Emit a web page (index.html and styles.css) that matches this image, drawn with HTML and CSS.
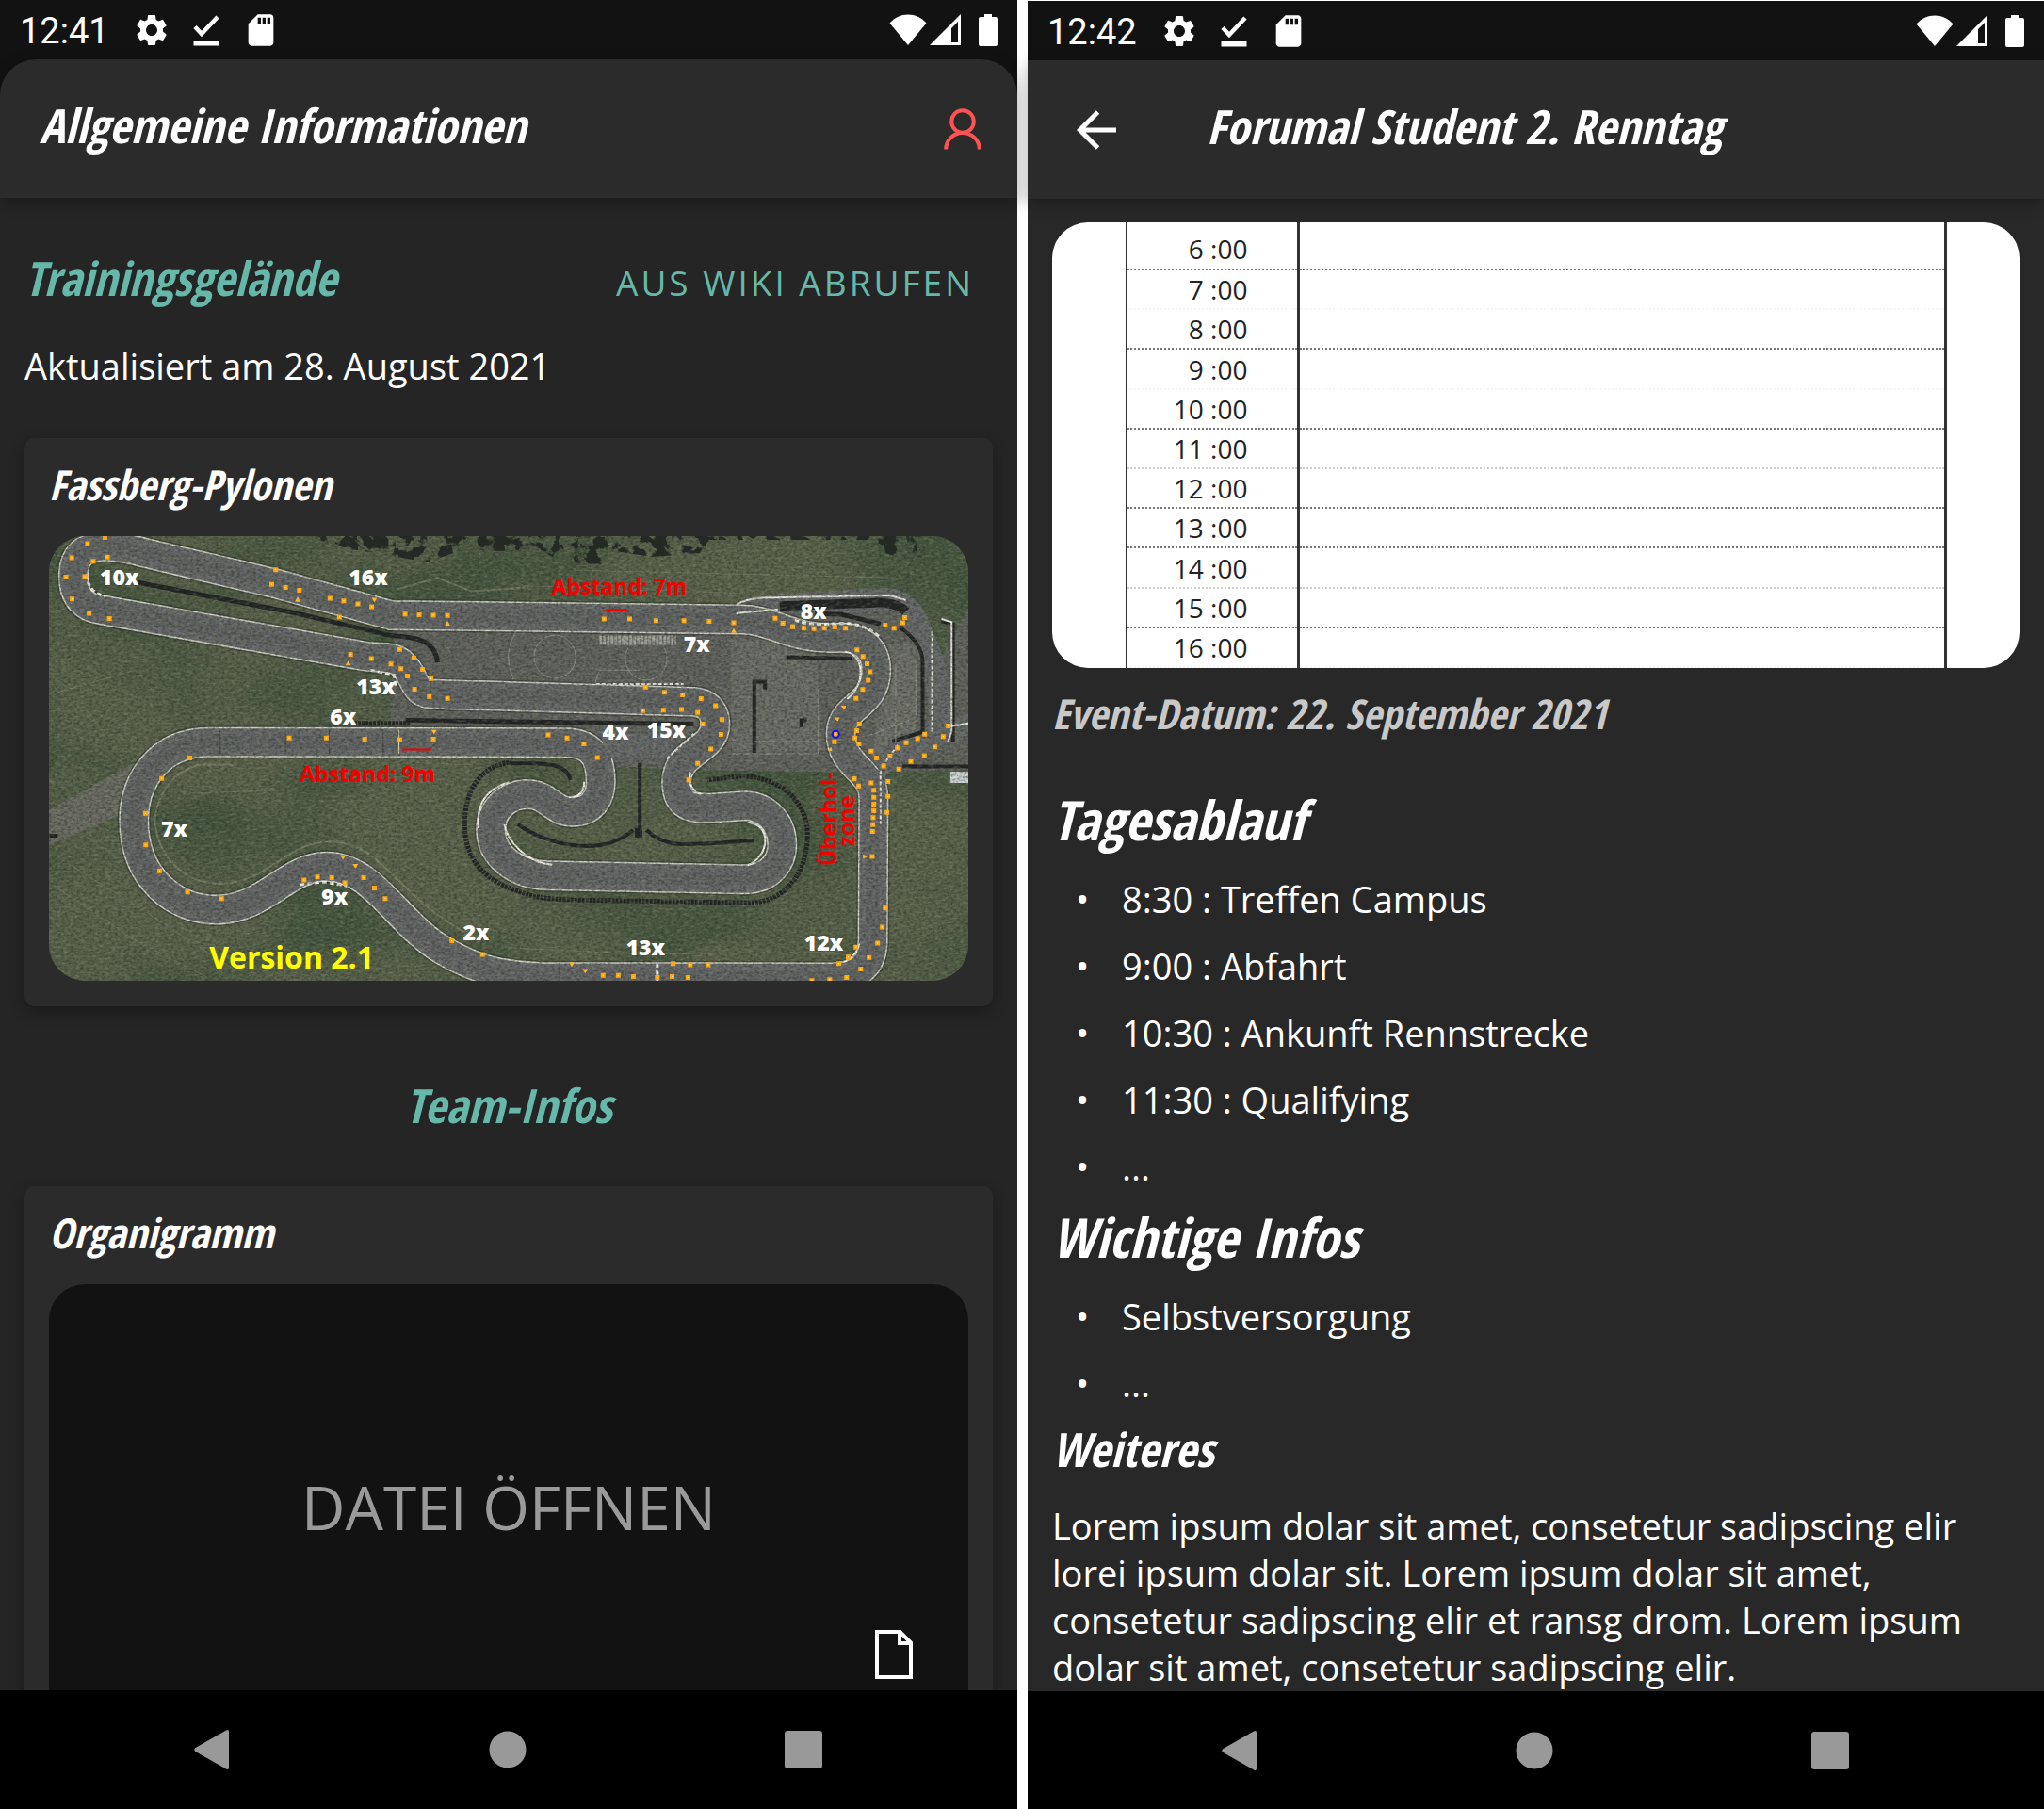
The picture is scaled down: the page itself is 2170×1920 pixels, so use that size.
FILE: index.html
```html
<!DOCTYPE html>
<html lang="de">
<head>
<meta charset="utf-8">
<meta name="viewport" content="width=device-width, initial-scale=1">
<title>Allgemeine Informationen</title>
<link rel="stylesheet" href="styles.css">
</head>
<body>
<svg class="sprite" aria-hidden="true">
  <symbol id="gear" viewBox="0 0 24 24"><path fill="currentColor" d="M19.14 12.94c.04-.3.06-.61.06-.94 0-.32-.02-.64-.07-.94l2.03-1.58c.18-.14.23-.41.12-.61l-1.92-3.32c-.12-.22-.37-.29-.59-.22l-2.39.96c-.5-.38-1.03-.7-1.62-.94l-.36-2.54c-.04-.24-.24-.41-.48-.41h-3.84c-.24 0-.43.17-.47.41l-.36 2.54c-.59.24-1.13.57-1.62.94l-2.39-.96c-.22-.08-.47 0-.59.22L2.74 8.87c-.12.21-.08.47.12.61l2.03 1.58c-.05.3-.09.63-.09.94s.02.64.07.94l-2.03 1.58c-.18.14-.23.41-.12.61l1.92 3.32c.12.22.37.29.59.22l2.39-.96c.5.38 1.03.7 1.62.94l.36 2.54c.05.24.24.41.48.41h3.84c.24 0 .44-.17.47-.41l.36-2.54c.59-.24 1.13-.56 1.62-.94l2.39.96c.22.08.47 0 .59-.22l1.92-3.32c.12-.22.07-.47-.12-.61l-2.01-1.58zM12 15.6c-1.98 0-3.6-1.62-3.6-3.6s1.62-3.6 3.6-3.6 3.6 1.62 3.6 3.6-1.62 3.6-3.6 3.6z"/></symbol>
  <symbol id="done" viewBox="0 0 40 40"><path fill="none" stroke="currentColor" stroke-width="4.500" d="M8 16.500l7 7.500L32 6"/><path fill="currentColor" d="M6.500 31h27v5.500h-27z"/></symbol>
  <symbol id="sdcard" viewBox="0 0 24 24"><path fill="currentColor" d="M18 2h-8L4.020 8 4 20c0 1.100.9 2 2 2h12c1.100 0 2-.9 2-2V4c0-1.100-.9-2-2-2zm-6 6h-2V4h2v4zm3 0h-2V4h2v4zm3 0h-2V4h2v4z"/></symbol>
  <symbol id="wifi" viewBox="0 0 40 34"><path fill="currentColor" d="M.500 9.500C11-2.500 29-2.500 39.500 9.500L20 33z"/></symbol>
  <symbol id="signal" viewBox="0 0 34 34"><path fill="currentColor" fill-rule="evenodd" d="M33 0v33H0zM30 8l-7 7v15h7z"/></symbol>
  <symbol id="battery" viewBox="0 0 20 34"><path fill="currentColor" d="M6 0h8v3h4q2 0 2 2v27q0 2-2 2H2q-2 0-2-2V5q0-2 2-2h4z"/></symbol>
  <symbol id="navback" viewBox="0 0 44 44"><path fill="currentColor" d="M37 1.500q3-1.500 3 1.500v38q0 3-3 1.500L4.500 24q-2.500-2 0-4z"/></symbol>
  <symbol id="navhome" viewBox="0 0 44 44"><circle cx="22" cy="22" r="19.500" fill="currentColor"/></symbol>
  <symbol id="navrecent" viewBox="0 0 44 44"><rect x="2" y="2" width="40" height="40" rx="3" fill="currentColor"/></symbol>
</svg>

<div class="screens">
  <section class="phone phone-info">
    <div class="status">
      <span class="clock">12:41</span>
      <svg class="sicon"><use href="#gear"/></svg><svg class="sicon"><use href="#done"/></svg><svg class="sicon"><use href="#sdcard"/></svg>
      <span class="radio"><svg class="wifi"><use href="#wifi"/></svg><svg class="signal"><use href="#signal"/></svg><svg class="battery"><use href="#battery"/></svg></span>
    </div>
    <header class="bar bar-round">
      <h1 class="title">Allgemeine Informationen</h1>
      <button class="iconbtn" aria-label="Profil"><svg class="user" viewBox="0 0 40 44"><g fill="none" stroke="#ff5252" stroke-width="4"><circle cx="20" cy="14" r="11.800"/><path d="M2.200 43.500C2.200 34 10 26 20 26s17.800 8 17.800 17.500"/></g></svg></button>
    </header>
    <main class="content">
      <div class="sechead">
        <h2 class="sectitle">Trainingsgelände</h2>
        <button class="textbtn">AUS WIKI ABRUFEN</button>
      </div>
      <p class="updated">Aktualisiert am 28. August 2021</p>
      <article class="card">
        <h3 class="cardtitle">Fassberg-Pylonen</h3>
        <svg class="map" viewBox="0 0 975 472" preserveAspectRatio="xMidYMid slice" role="img" aria-label="Streckenplan Fassberg">
          <defs>
            <filter id="grain" x="0" y="0" width="100%" height="100%"><feTurbulence type="fractalNoise" baseFrequency=".3 .4" numOctaves="3" seed="4"/><feColorMatrix values="0 0 0 0 .14  0 0 0 0 .17  0 0 0 0 .12  2.200 0 0 0 -.85"/></filter>
            <filter id="light" x="0" y="0" width="100%" height="100%"><feTurbulence type="fractalNoise" baseFrequency=".15 .4" numOctaves="3" seed="9"/><feColorMatrix values="0 0 0 0 .68  0 0 0 0 .67  0 0 0 0 .55  2.200 0 0 0 -1"/></filter>
            <filter id="patch" x="0" y="0" width="100%" height="100%"><feTurbulence type="fractalNoise" baseFrequency=".006 .011" numOctaves="3" seed="12"/><feColorMatrix values="0 0 0 0 .22  0 0 0 0 .31  0 0 0 0 .22  3 0 0 0 -1.200"/></filter>
            <filter id="trees" x="0" y="0" width="100%" height="100%"><feTurbulence type="fractalNoise" baseFrequency=".07" numOctaves="5" seed="3"/><feColorMatrix values="0 0 0 0 .14  0 0 0 0 .16  0 0 0 0 .14  12 0 0 0 -5.800" result="n"/><feComposite in="n" in2="SourceAlpha" operator="in"/></filter>
            <path id="track" d="M1160 497L820 415 430 335C280 300 218 320 218 395C218 450 250 478 300 483L1060 600C1120 612 1160 600 1190 620C1240 655 1220 702 1290 702L2060 722C2100 724 2124 745 2124 780C2124 850 2009 850 2009 930C2009 1000 2060 998 2110 998L2210 992C2350 992 2370 1183 2210 1183L1630 1173C1530 1173 1458 1120 1458 1055C1458 1000 1510 962 1565 962C1630 962 1640 1008 1700 1008C1760 1008 1784 970 1784 930C1784 850 1740 829 1680 828L620 827C470 827 398 930 398 1030C398 1180 520 1262 640 1262C790 1262 850 1150 970 1150C1110 1150 1180 1300 1320 1370C1430 1425 1500 1432 1600 1437L2470 1438C2560 1438 2592 1400 2592 1340L2594 970C2594 900 2497 890 2497 805C2497 730 2602 735 2602 640C2602 585 2560 555 2500 555C2350 565 2300 508 2200 508Z"/>
            <path id="conesA" d="M312 295h.1M260 311h.1M213 348h.1M196 398h.1M214 455h.1M265 492h.1M325 506h.1M277 357h.1M319 346h.1M252 397h.1M819 379h.1M807 417h.1M848 425h.1M889 432h.1M980 453h.1M1021 460h.1M1063 468h.1M1104 475h.1M1008 502h.1M1203 494h.1M1245 496h.1M1287 497h.1M1329 498h.1M1041 599h.1M1103 610h.1M1187 586h.1M1229 608h.1M1161 624h.1M1191 636h.1M1210 655h.1M1255 638h.1M1280 662h.1M1231 689h.1M1275 708h.1M1329 713h.1M859 816h.1M969 816h.1M1083 819h.1M1187 820h.1M1287 819h.1M564 868h.1M480 921h.1M432 1012h.1M433 1094h.1M474 1161h.1M557 1216h.1M658 1233h.1M903 1185h.1M943 1177h.1M985 1179h.1M1024 1192h.1M1080 1179h.1M1112 1206h.1M1144 1233h.1M1342 1343h.1M1433 1378h.1"/>
            <path id="conesB" d="M282 507h.1M358 507h.1M436 511h.1M519 511h.1M594 513h.1M667 517h.1M790 505h.1M813 518h.1M842 527h.1M875 531h.1M905 532h.1M936 531h.1M967 528h.1M999 531h.1M1117 523h.1M1143 531h.1M1169 517h.1M1175 503h.1M1033 587h.1M1051 604h.1M1063 623h.1M1072 644h.1M1066 666h.1M1050 690h.1M1030 713h.1M1040 780h.1M1032 797h.1M1027 816h.1M1039 831h.1M970 806h.1M966 826h.1M1075 850h.1M1091 868h.1M1112 889h.1M1131 863h.1M1153 842h.1M1179 828h.1M1213 818h.1M1234 806h.1M1304 785h.1M1289 812h.1M1264 839h.1M1233 862h.1M1193 877h.1M1157 897h.1M405 684h.1M461 697h.1M515 704h.1M570 714h.1M613 732h.1M632 768h.1M629 807h.1M599 845h.1M560 882h.1M533 925h.1M397 745h.1M458 744h.1M512 742h.1M560 750h.1M575 780h.1M116 808h.1M172 816h.1M222 831h.1M262 867h.1M1025 922h.1M1038 941h.1M1075 933h.1M1083 952h.1M1083 970h.1M1083 988h.1M1083 1005h.1M1081 1023h.1M1080 1041h.1M1079 1059h.1M1125 929h.1M1125 968h.1M1122 1009h.1M1078 1124h.1M1117 1258h.1M1108 1307h.1M1094 1349h.1M1069 1386h.1M1044 1416h.1M1002 1438h.1M952 1444h.1M899 1446h.1M1030 1359h.1M1007 1385h.1M979 1402h.1M487 1402h.1M538 1405h.1M591 1405h.1M279 1433h.1M324 1433h.1M369 1436h.1M440 1438h.1M484 1436h.1M531 1438h.1"/>
          </defs>
          <rect width="975" height="472" fill="#5a624b"/>
          <rect width="975" height="472" filter="url(#patch)" opacity=".6"/>
          <g transform="translate(-52 -119) scale(.35714 .40816)" fill="none">
            <path fill="#6a6b63" d="M130 1010L400 880 400 1000 130 1100z"/>
            <path fill="#61625f" d="M1170 500L2200 508 2180 460 2700 470 2800 600 2876 480V900L2480 905 2150 900 1780 890 1660 800 1160 780z"/>
            <path fill="#6b6d68" d="M2172 560h250l20 290h-270z"/>
            <path fill="#6e6f6a" d="M2640 570h80v300h-130z"/>
            <path stroke="#66686a" stroke-width="24" d="M2590 900L2700 830 2890 780M2680 500Q2790 560 2790 780M2200 490L2320 470 2640 455Q2720 470 2740 560"/>
            <path stroke="#8c8c74" stroke-width="2" opacity=".6" d="M690 885H600C500 900 460 980 460 1040C480 1150 570 1195 660 1195C800 1190 850 1085 980 1085C1140 1085 1170 1230 1420 1340M1180 430L1300 400 1400 435 1560 425"/>
            <path stroke="#84866f" stroke-width="1" opacity=".5" d="M1240 880L1400 886M1540 420L2200 440M1700 380L2680 400M1500 1360L1900 1378 2480 1372M180 1130L420 1260 700 1420M160 1200L400 1340 620 1440M160 700L400 640M560 960L900 950"/>
            <g stroke="#202224">
              <path stroke-width="5" d="M410 412L880 492 1160 550C1240 555 1290 560 1300 620M1205 770L2060 780"/>
              <path stroke-width="5" stroke-dasharray="3 1" d="M1030 778H1220M1512 880C1420 890 1380 960 1380 1040C1380 1160 1480 1200 1560 1220C1620 1240 1700 1236 1930 1240L2220 1244C2330 1244 2400 1170 2398 1060C2390 960 2290 915 2200 915L2100 925"/>
              <path stroke-width="4" d="M1512 882C1620 880 1680 880 1695 925M1538 1040C1620 1090 1780 1130 1880 1055M1920 1055C1980 1110 2060 1090 2240 1083M1900 880V1060M2335 606L2530 610M2672 528Q2740 570 2740 620V800L2650 825M2240 855V670H2272V690M2795 512L2830 520V825M2380 788V770H2396M2680 890H2876M147 1070H172M1820 820L1845 858M1972 845L1990 835"/>
              <path stroke-width="10" d="M1886 1062h22"/>
            </g>
            <g stroke="#8b8d87" stroke-width="1">
              <ellipse cx="1648" cy="605" rx="62" ry="56"/><ellipse cx="1919" cy="610" rx="62" ry="56"/><path d="M1532 540Q1490 600 1525 665M1768 672L1780 640H1900M2240 825H2430M2175 857H2430V690M2720 620V760M2580 810L2700 770M2660 620V830"/>
            </g>
            <path stroke="#b9bab4" stroke-width="10" stroke-dasharray="3 1" opacity=".75" d="M1780 562H2008"/>
            <use href="#track" stroke="#1f211e" stroke-width="35" opacity=".4"/>
            <use href="#track" stroke="#d2d3c9" stroke-width="32"/>
            <use href="#track" stroke="#66686a" stroke-width="29"/>
            <use href="#track" stroke="#5f6163" stroke-width="14" opacity=".7"/>
            <path stroke="#66686a" stroke-width="26" d="M1790 838H2000M2594 900V960"/>
            <path stroke="#202224" stroke-width="10" d="M2315 473L2620 464Q2670 468 2690 488"/>
            <path stroke="#202224" stroke-width="5" d="M2420 493L2500 495 2615 520"/>
            <path stroke="#f2f0e6" stroke-width="2" d="M1512 930C1440 950 1415 990 1420 1050M1498 1040C1505 1080 1560 1140 1640 1145M1735 930Q1735 970 1690 970M2220 1035C2290 1040 2290 1120 2220 1147M2050 905Q2040 950 2082 962M2510 592C2570 600 2570 680 2515 715M2490 1400Q2540 1395 2552 1350"/>
            <path stroke="#f0efe8" stroke-width="3" stroke-dasharray="5 3" d="M258 390Q260 440 315 447M1100 640L1170 652 1175 680M890 1198L960 1190 1030 1200M2360 510Q2400 525 2510 518 2570 520 2615 555M1952 1400V1448"/>
            <path stroke="#e8e8e0" stroke-width="2" stroke-dasharray="4 2" d="M1770 676H2030M2768 540V800M2615 900V1040M1980 870L2060 805M2620 890L2670 830"/>
            <path stroke="#e8e8e0" stroke-width="2" d="M2188 470Q2210 455 2260 452L2640 445 2690 458M2186 492L2310 482M2796 507L2826 515V800L2815 825M2826 785L2876 778"/>
            <path stroke="#35373a" stroke-width="1" opacity=".6" d="M654 795V858M746 795V858M848 795V858M978 795V858M1138 795V858M1662 1400V1448M1118 450L1100 480"/>
            <path stroke="#dcd9a8" stroke-width="1" d="M1185 790V858"/>
            <path stroke="#cfd6d8" stroke-width="12" d="M2822 918H2876"/>
          </g>
          <rect width="975" height="472" filter="url(#grain)" opacity=".5"/>
          <rect width="975" height="472" filter="url(#light)" opacity=".3"/>
          <path filter="url(#trees)" d="M270 0H930L925 22 890 26 870 4 700 4 690 18 640 22 600 16 590 30 545 28 520 14 480 16 440 14 400 28 360 20 320 14z"/>
          <g fill="none" stroke-linecap="square">
            <g transform="translate(-52 -119) scale(.35714 .40816)"><use href="#conesA" stroke="#ffa90f" stroke-width="5"/><use href="#conesA" stroke="#fff" stroke-width="1"/><path fill="#ffb52a" d="M876 462l8-14 8 14zM1104 452h16l-8 12zM1321 524l8-12 8 12zM1026 627l8-12 8 12zM1281 795h16l-8 12zM1010 1120h17l-8 12zM1047 1143h17l-8 12z"/><path stroke="#f40000" stroke-width="2" d="M1198 846H1278"/></g>
            <g transform="translate(488 -119) scale(.35714 .40816)"><use href="#conesB" stroke="#ffa90f" stroke-width="5"/><use href="#conesB" stroke="#fff" stroke-width="1"/><path fill="#ffb52a" d="M659 543l8-12 8 12zM985 732l16 0-5 11zM965 763h16l-5 11zM945 848l12-8 2 10zM178 1399h16l-8 12zM218 1416h16l-8 12zM1051 1118l14 6-14 6z"/><path stroke="#f40000" stroke-width="2" d="M290 483H348"/><ellipse cx="970" cy="806" rx="10" ry="9" stroke="#1212f0" stroke-width="2"/></g>
          </g>
          <g class="count">
            <text x="54" y="52">10x</text><text x="318" y="52">16x</text><text x="326" y="168">13x</text><text x="298" y="200">6x</text><text x="119" y="319">7x</text><text x="289" y="391">9x</text><text x="439" y="429">2x</text><text x="673" y="123">7x</text><text x="797" y="88">8x</text><text x="587" y="216">4x</text><text x="634" y="214">15x</text><text x="612" y="445">13x</text><text x="801" y="440">12x</text>
          </g>
          <g class="dist"><text x="533" y="62">Abstand: 7m</text><text x="266" y="261">Abstand: 9m</text><text transform="translate(835 350) rotate(-90)">Überhol-</text><text transform="translate(854 329) rotate(-90)">zone</text></g>
          <text class="version" x="170" y="459">Version 2.1</text>
        </svg>
      </article>
      <h2 class="sectitle teamtitle">Team-Infos</h2>
      <article class="card">
        <h3 class="cardtitle">Organigramm</h3>
        <button class="filebtn">DATEI ÖFFNEN
          <svg class="file" viewBox="0 0 40 52" aria-hidden="true"><path fill="none" stroke="#fff" stroke-width="4" d="M2 2h24.500L38 13.500V50H2zM26 2v12h12"/></svg>
        </button>
      </article>
    </main>
    <nav class="nav"><button aria-label="Zurück"><svg><use href="#navback"/></svg></button><button aria-label="Startseite"><svg><use href="#navhome"/></svg></button><button aria-label="Übersicht"><svg><use href="#navrecent"/></svg></button></nav>
  </section>

  <section class="phone phone-event">
    <div class="status">
      <span class="clock">12:42</span>
      <svg class="sicon"><use href="#gear"/></svg><svg class="sicon"><use href="#done"/></svg><svg class="sicon"><use href="#sdcard"/></svg>
      <span class="radio"><svg class="wifi"><use href="#wifi"/></svg><svg class="signal"><use href="#signal"/></svg><svg class="battery"><use href="#battery"/></svg></span>
    </div>
    <header class="bar bar-sub">
      <button class="iconbtn" aria-label="Zurück"><svg class="arrow" viewBox="0 0 42 42"><path fill="none" stroke="#fff" stroke-width="5" d="M42 21H4M22.500 2L3.500 21l19 19"/></svg></button>
      <h1 class="title">Forumal Student 2. Renntag</h1>
    </header>
    <main class="content event">
      <div class="plan">
        <table class="hours">
          <tr><th scope="row">6 :00</th><td></td></tr>
          <tr class="faint"><th scope="row">7 :00</th><td></td></tr>
          <tr><th scope="row">8 :00</th><td></td></tr>
          <tr class="faint"><th scope="row">9 :00</th><td></td></tr>
          <tr><th scope="row">10 :00</th><td></td></tr>
          <tr class="pale"><th scope="row">11 :00</th><td></td></tr>
          <tr><th scope="row">12 :00</th><td></td></tr>
          <tr><th scope="row">13 :00</th><td></td></tr>
          <tr class="pale"><th scope="row">14 :00</th><td></td></tr>
          <tr><th scope="row">15 :00</th><td></td></tr>
          <tr class="faint"><th scope="row">16 :00</th><td></td></tr>
        </table>
      </div>
      <p class="date">Event-Datum: 22. September 2021</p>
      <h2 class="heading">Tagesablauf</h2>
      <ul class="list"><li>8:30 : Treffen Campus</li><li>9:00 : Abfahrt</li><li>10:30 : Ankunft Rennstrecke</li><li>11:30 : Qualifying</li><li>...</li></ul>
      <h2 class="heading">Wichtige Infos</h2>
      <ul class="list"><li>Selbstversorgung</li><li>...</li></ul>
      <h3 class="subheading">Weiteres</h3>
      <p class="text">Lorem ipsum dolar sit amet, consetetur sadipscing elir lorei ipsum dolar sit. Lorem ipsum dolar sit amet, consetetur sadipscing elir et ransg drom. Lorem ipsum dolar sit amet, consetetur sadipscing elir.</p>
    </main>
    <nav class="nav"><button aria-label="Zurück"><svg><use href="#navback"/></svg></button><button aria-label="Startseite"><svg><use href="#navhome"/></svg></button><button aria-label="Übersicht"><svg><use href="#navrecent"/></svg></button></nav>
  </section>
</div>
</body>
</html>
```
FILE: styles.css
```css
* { box-sizing: border-box; }
body { margin: 0; background: #fff; color: #fff; font: 38px/50px "Open Sans", "Noto Sans", sans-serif; }
h1, h2, h3, p, ul { margin: 0; padding: 0; }
button { border: 0; padding: 0; background: none; color: inherit; font: inherit; cursor: pointer; }
svg { display: block; flex: none; }
.sprite { position: absolute; width: 0; height: 0; }

.screens { display: grid; grid-template-columns: 1080fr 1079fr; gap: 11px; height: 100vh; }
.phone { display: flex; flex-direction: column; min-width: 0; min-height: 0; background: #252525; }
.phone-event { margin-top: 1px; background: #282828; }

.status { display: flex; align-items: center; height: 63px; padding: 0 21px 0 21px; gap: 18px; flex: none; background: #121212; }
.clock { font: 38px/44px Roboto, sans-serif; margin-right: 7px; padding-top: 2px; }
.sicon { width: 40px; height: 40px; }
.radio { display: flex; align-items: center; margin-left: auto; }
.wifi { width: 40px; height: 34px; }
.signal { width: 34px; height: 34px; margin: 0 18px 0 3px; }
.battery { width: 20px; height: 34px; }

.bar { display: flex; align-items: center; height: 147px; flex: none; padding: 0 38px 0 42px; background: #2b2b2b; box-shadow: 0 4px 16px rgba(0, 0, 0, .3); position: relative; }
.bar-round { justify-content: space-between; border-radius: 38px 38px 0 0; }
.phone-info { background: linear-gradient(#121212 0 120px, #252525 120px); }
.bar-sub { padding-left: 52px; gap: 96px; }
.title, .sectitle, .cardtitle, .date, .heading, .subheading { font-family: "Open Sans Condensed", "Liberation Sans Narrow", "Open Sans", sans-serif; font-weight: 700; font-style: italic; }
.title { font-size: 50px; line-height: 60px; padding-bottom: 8px; }
.user { width: 40px; height: 44px; }
.arrow { width: 42px; height: 42px; }

.content { flex: 1; min-height: 0; overflow: hidden; padding: 0 26px; }
.sechead { display: flex; align-items: baseline; justify-content: space-between; padding: 53px 20px 0 0; }
.sectitle { font-size: 50px; line-height: 64px; color: #66b8a9; }
.textbtn { font-size: 37px; color: #66b8a9; letter-spacing: 3px; }
.updated { margin-top: 36px; }
.card { margin-top: 52px; padding: 19px 26px 27px; border-radius: 10px; background: #2b2b2b; box-shadow: 0 6px 16px rgba(0, 0, 0, .3); }
.cardtitle { font-size: 44px; line-height: 60px; margin-bottom: 25px; }
.map { width: 100%; aspect-ratio: 975 / 472; border-radius: 38px; }
.map path, .map ellipse { vector-effect: non-scaling-stroke; }
.map filter { color-interpolation-filters: sRGB; }
.count, .dist, .version { font-family: "Open Sans", sans-serif; font-weight: 800; font-size: 23px; }
.count { fill: #fff; }
.dist { fill: #f40000; font-weight: 700; }
.version { fill: #ff0; font-size: 32px; font-weight: 700; }
.teamtitle { margin-top: 73px; padding-bottom: 2px; text-align: center; }
.filebtn { position: relative; display: block; width: 100%; height: 474px; border-radius: 38px; background: #121212; color: #9a9a9a; font-size: 64px; line-height: 80px; }
.file { position: absolute; right: 59px; bottom: 55px; width: 40px; height: 52px; }

.plan { margin-top: 25px; height: 473px; border-radius: 38px; overflow: hidden; background: #fff; padding: 0 77px 0 78px; }
.hours { width: 100%; height: 100%; border-collapse: collapse; table-layout: fixed; border: solid #333; border-width: 0 3px 0 2px; color: #222; }
.hours th { width: 182px; border-right: 3px solid #333; padding: 0 52px 0 0; text-align: right; font-size: 28px; line-height: 30px; font-weight: 400; }
.hours td { padding: 0; }
.hours tr { border-bottom: 2px dotted #777; }
.hours .faint { border-bottom-color: #f6f6f6; }
.hours .pale { border-bottom-color: #ccc; }
.hours tr:first-child th { padding-top: 7px; }
.date { font-size: 44px; line-height: 60px; margin-top: 18px; color: #c8c8c8; }
.heading { font-size: 58px; line-height: 70px; padding-bottom: 3px; }
.date + .heading { margin-top: 48px; }
.list { list-style: none; padding-bottom: 15px; }
.list li { display: flex; margin-top: 21px; }
.list li::before { content: "•"; width: 49px; padding-left: 25px; }
.subheading { font-size: 50px; line-height: 60px; }
.text { margin-top: 26px; }

.nav { display: flex; justify-content: space-around; align-items: center; flex: none; height: 126px; padding: 0 70px 0 68px; background: #000; color: #999; position: relative; }
.phone-event .nav { height: 125px; }
.nav svg { width: 44px; height: 44px; }
```
